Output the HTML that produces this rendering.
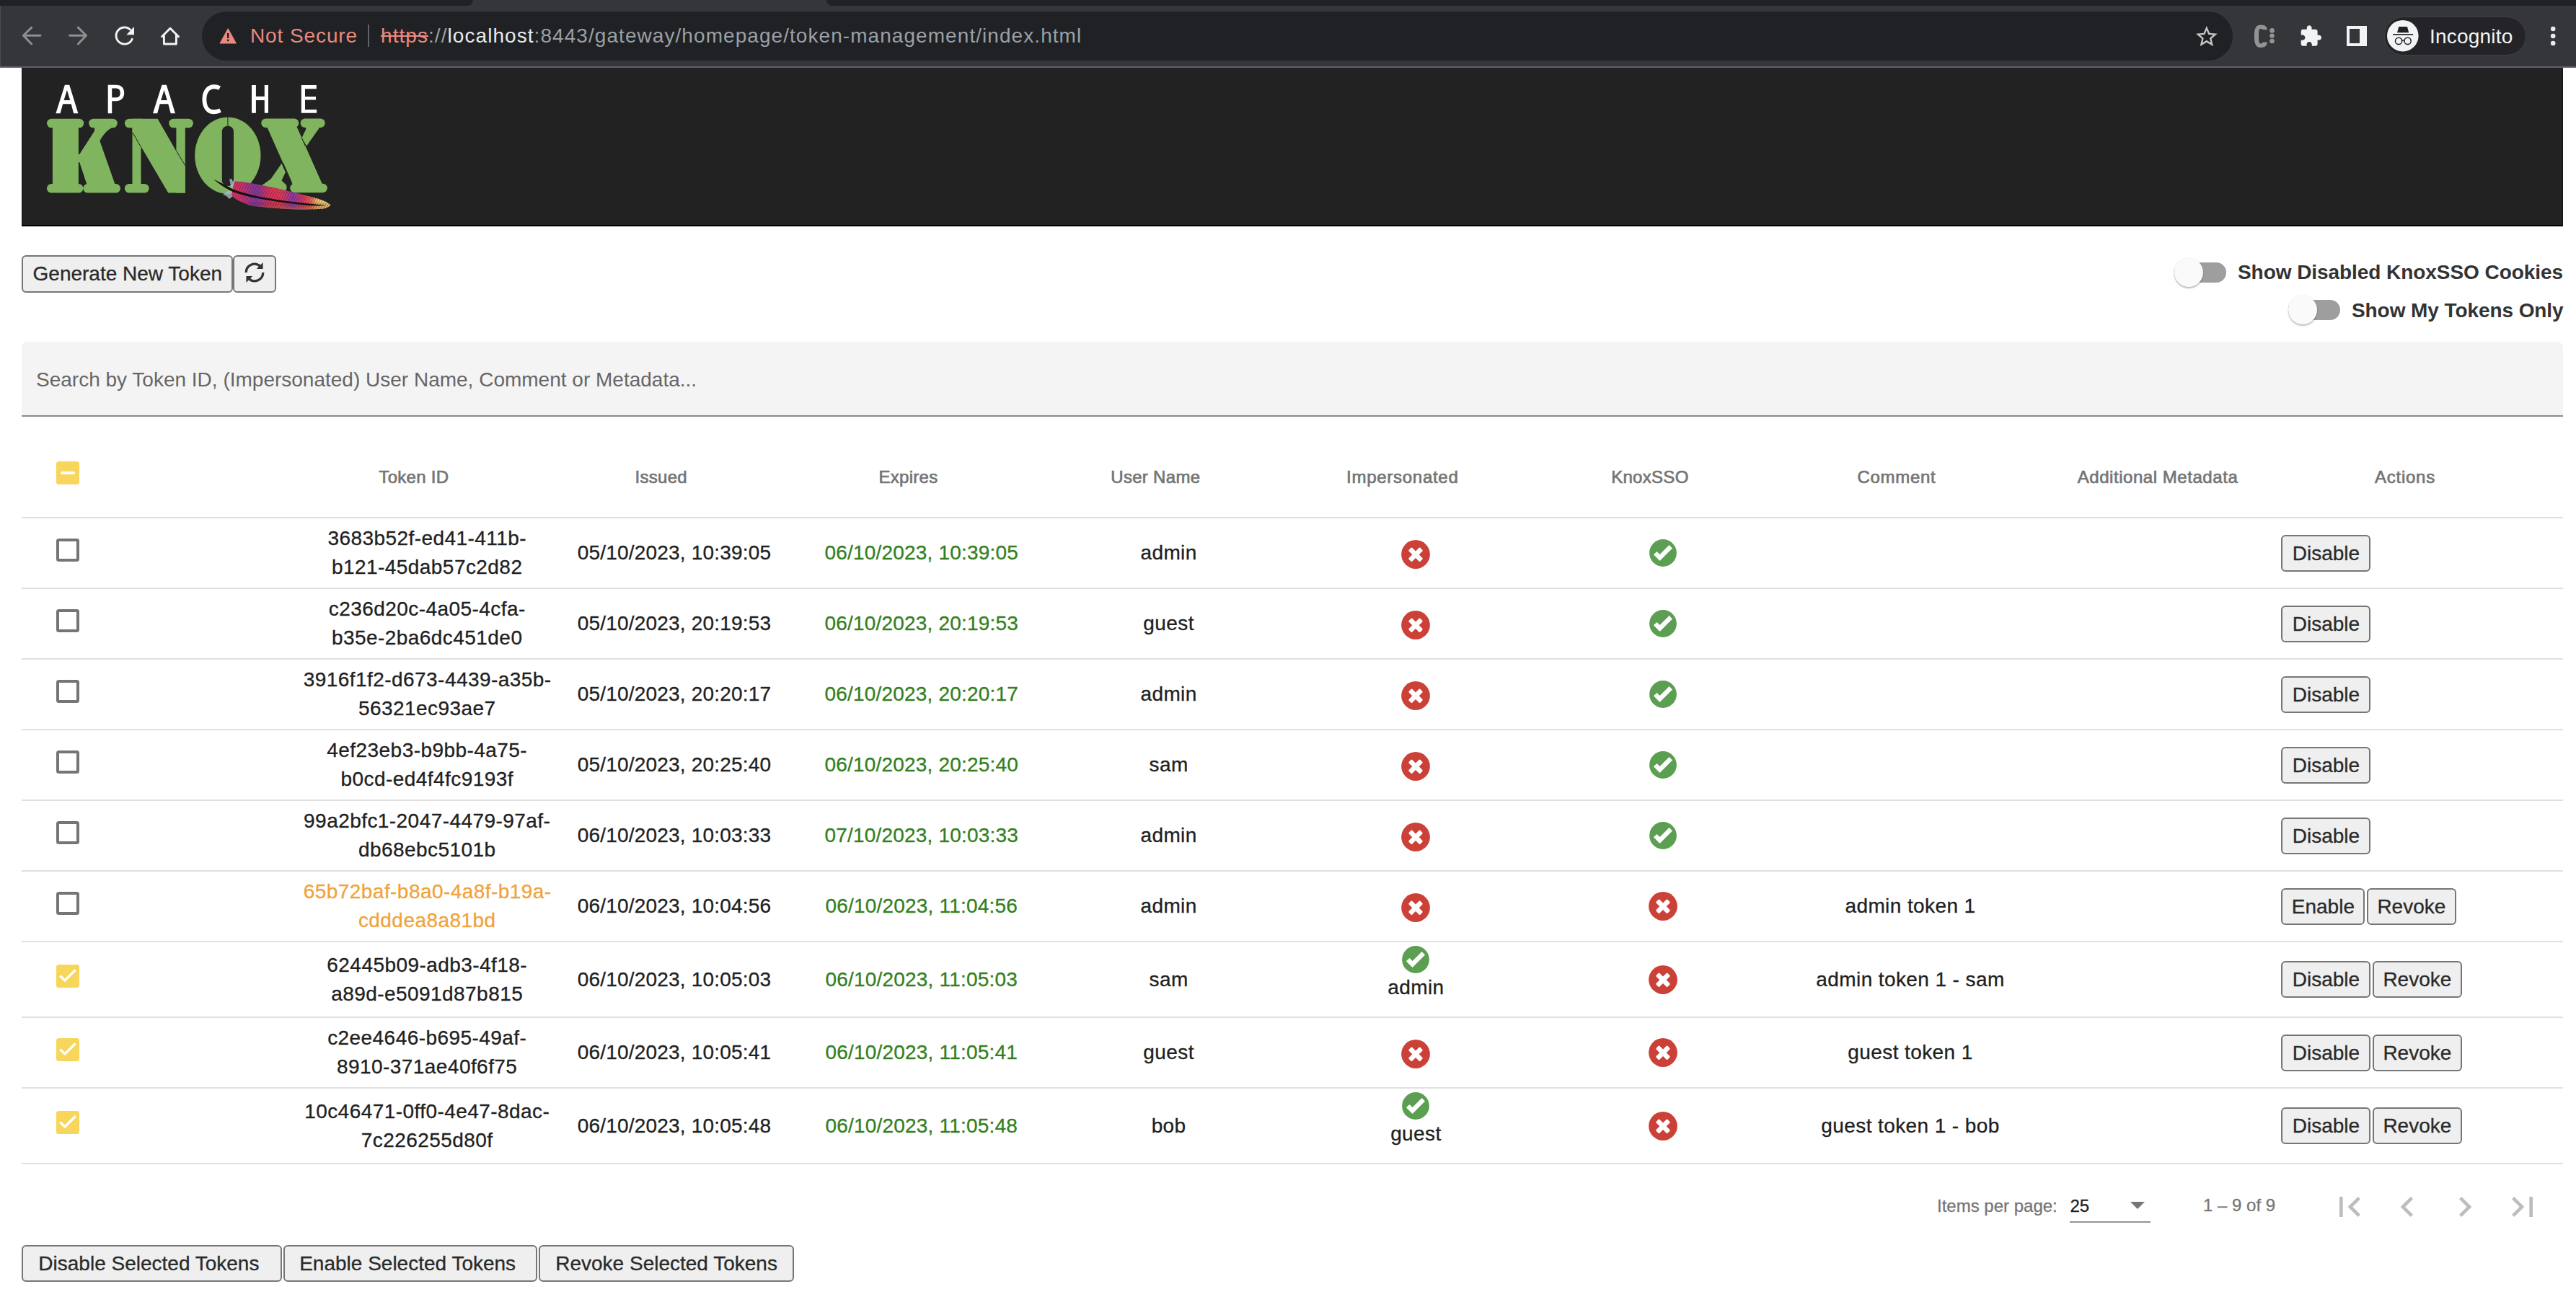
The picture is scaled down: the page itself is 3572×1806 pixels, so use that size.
<!DOCTYPE html>
<html><head><meta charset="utf-8">
<style>
*{box-sizing:border-box;margin:0;padding:0}
html,body{width:3572px;height:1806px;overflow:hidden;background:#fff}
body{position:relative;font-family:"Liberation Sans",sans-serif;color:#212121}
.a{position:absolute}
/* chrome */
#tabs{left:0;top:0;width:3572px;height:8px;background:#202124}
#tab{left:640px;top:0;width:522px;height:8px;background:#35363a}
#tabl{left:620px;top:0;width:36px;height:8px;background:#202124;border-bottom-right-radius:12px}
#tabr{left:1146px;top:0;width:36px;height:8px;background:#202124;border-bottom-left-radius:12px}
#toolbar{left:0;top:8px;width:3572px;height:84px;background:#35363a}
#tbline{left:0;top:92px;width:3572px;height:2px;background:#5f6166}
#pill{left:280px;top:16px;width:2816px;height:68px;border-radius:34px;background:#202124}
.ct{font-size:28px;line-height:28px;white-space:nowrap}
#notsec{left:347px;top:36.4px;color:#e98a80;letter-spacing:0.9px}
#sep{left:510px;top:34px;width:2px;height:31px;background:#5f6368}
#url{left:528px;top:36.4px;color:#9aa0a6;letter-spacing:1.06px}
#url .w{color:#e8eaed}
#url .s{color:#e98a80;text-decoration:line-through}
#incog{left:3305.5px;top:22.5px;width:197px;height:54px;border-radius:27px;background:#242428;border:1.5px solid #3f4044}
#incogc{left:3310px;top:28px;width:44px;height:44px;border-radius:22px;background:#f1f3f4}
#incogt{left:3369px;top:37.4px;color:#f1f3f4;letter-spacing:0.2px}
/* header */
#hdr{left:30px;top:94px;width:3524px;height:220px;background:#222;border-bottom:2px solid #000;border-left:1px solid #151515;border-right:1px solid #151515}
/* buttons */
.btn{position:absolute;height:51px;background:#efefef;border:2px solid #767676;border-radius:6px;font-size:28px;line-height:47px;text-align:center;color:#2a2a2a;white-space:nowrap;-webkit-text-stroke:0.3px #2a2a2a}
/* toggles */
.track{position:absolute;width:72px;height:28px;border-radius:14px;background:#9e9e9e}
.thumb{position:absolute;width:40px;height:40px;border-radius:20px;background:#fafafa;box-shadow:0 2px 2px rgba(0,0,0,.24),0 0 2px rgba(0,0,0,.12)}
.tlab{position:absolute;font-size:28px;line-height:28px;font-weight:bold;color:#333;white-space:nowrap}
/* search */
#search{left:30px;top:474px;width:3524px;height:104px;background:#f4f4f4;border-radius:8px 8px 0 0;border-bottom:2px solid #8a8a8a}
#ph{left:50px;top:513.4px;font-size:28px;line-height:28px;color:#666;white-space:nowrap}
/* table */
.hline{position:absolute;left:30px;width:3524px;height:2px;background:#e0e0e0}
.th{position:absolute;top:649.7px;font-size:24px;line-height:24px;color:#757575;white-space:nowrap;text-align:center;width:400px;-webkit-text-stroke:0.7px #757575;letter-spacing:0.3px}
.cb{position:absolute;left:78px;width:32px;height:32px;border-radius:3.5px}
.cbu{border:4px solid #757575}
.cby{background:#f8d65c}
.row{position:absolute;left:78px;width:3428px;display:flex;align-items:center}
.cell{position:absolute;width:342.8px;text-align:center;font-size:28px;line-height:40px;white-space:nowrap;color:#212121;letter-spacing:0.4px;-webkit-text-stroke:0.3px currentColor}
.tok{letter-spacing:0.44px}
.dt{letter-spacing:0.2px}
.ic{position:absolute}
.exp{color:#338020}
.org{color:#f0a33a}
.ic{display:inline-block;vertical-align:middle}
/* paginator */
.pg{position:absolute;font-size:24px;line-height:24px;color:#757575;white-space:nowrap;-webkit-text-stroke:0.3px currentColor}
</style></head><body>
<!-- browser chrome -->
<div id="tabs" class="a"></div>
<div id="tab" class="a"></div>
<div id="tabl" class="a"></div>
<div id="tabr" class="a"></div>
<div id="toolbar" class="a"></div>
<div id="tbline" class="a"></div>
<div class="a" style="left:0;top:8px;width:1px;height:84px;background:#4a4b4f"></div>
<div id="pill" class="a"></div>
<div id="notsec" class="a ct">Not Secure</div>
<div id="sep" class="a"></div>
<div id="url" class="a ct"><span class="s">https</span>://<span class="w">localhost</span>:8443/gateway/homepage/token-management/index.html</div>
<div id="incog" class="a"></div>
<div id="incogt" class="a ct">Incognito</div>
<svg class="a" style="left:0;top:0" width="300" height="92" viewBox="0 0 300 92">
<g fill="none" stroke="#8e8f91" stroke-width="2.9" stroke-linecap="round" stroke-linejoin="round">
<path d="M43.8 38.1L32.4 49.3L43.8 60.9M32.4 49.3H56"/>
<path d="M108.3 38.1L119.5 49.3L108.3 60.9M119.5 49.3H96.6"/>
</g>
<g fill="none" stroke="#f1f3f4" stroke-width="2.9" stroke-linecap="round">
<path d="M183.2 54.3A11.6 11.6 0 1 1 180.5 41"/>
</g>
<path d="M186 37.1V48.3H175.3Z" fill="#f1f3f4"/>
<path d="M224.5 50.7L236 39.2L247.5 50.7M227.4 49V61H244.4V49" fill="none" stroke="#f1f3f4" stroke-width="2.9" stroke-linecap="round" stroke-linejoin="round"/>
</svg>
<svg class="a" style="left:290px;top:0" width="50" height="92" viewBox="290 0 50 92">
<path d="M305.2 60L316.2 40L327.2 60Z" fill="#e98a80" stroke="#e98a80" stroke-width="1.2" stroke-linejoin="round"/>
<rect x="315" y="46" width="2.4" height="7" fill="#202124"/>
<rect x="315" y="54.6" width="2.4" height="2.6" fill="#202124"/>
</svg>
<svg class="a" style="left:3042.2px;top:32.5px" width="35.64" height="35.64" viewBox="0 0 24 24"><path fill="#c4c7c5" d="M22 9.24l-7.19-.62L12 2 9.19 8.63 2 9.24l5.46 4.73L5.82 21 12 17.27 18.18 21l-1.63-7.03L22 9.24zM12 15.4l-3.76 2.27 1-4.28-3.32-2.88 4.38-.38L12 6.1l1.71 4.04 4.38.38-3.32 2.88 1 4.28L12 15.4z"/></svg>
<svg class="a" style="left:3120px;top:30px" width="40" height="40" viewBox="3120 30 40 40">
<path d="M3143.7 41.2C3143.7 37.2 3141.5 34.4 3134.8 34.4C3128.2 34.4 3125.9 39 3125.9 50.2C3125.9 61.3 3128.2 65.9 3134.8 65.9C3141.5 65.9 3143.7 63 3143.7 58.6H3137.6C3137.6 59.8 3136.8 60.4 3134.8 60.4C3132.6 60.4 3132 58.6 3132 50.2C3132 41.7 3132.6 39.9 3134.8 39.9C3136.8 39.9 3137.6 40.4 3137.6 41.2Z" fill="#939393"/>
<circle cx="3150.5" cy="42.4" r="3.3" fill="#939393"/><circle cx="3150.5" cy="49.7" r="3.3" fill="#939393"/><circle cx="3150.5" cy="57" r="3.3" fill="#939393"/>
</svg>
<svg class="a" style="left:3187.7px;top:33.65px" width="32.35" height="32.35" viewBox="0 0 24 24"><path fill="#f1f3f4" d="M20.5 11H19V7c0-1.1-.9-2-2-2h-4V3.5C13 2.12 11.88 1 10.5 1S8 2.120 8 3.5V5H4c-1.1 0-1.99.9-1.99 2v3.8H3.5c1.49 0 2.7 1.21 2.7 2.7s-1.21 2.7-2.7 2.7H2V20c0 1.1.9 2 2 2h3.8v-1.5c0-1.49 1.21-2.7 2.7-2.7 1.490 0 2.7 1.21 2.7 2.7V22H17c1.1 0 2-.9 2-2v-4h1.5c1.38 0 2.5-1.12 2.5-2.5S21.88 11 20.5 11z"/></svg>
<div class="a" style="left:3253.8px;top:35.5px;width:28.3px;height:28.5px;background:#f1f3f4"></div>
<div class="a" style="left:3258px;top:39.9px;width:14.1px;height:19.9px;background:#35363a"></div>
<svg class="a" style="left:3305px;top:22px" width="60" height="56" viewBox="3305 22 60 56">
<circle cx="3331.8" cy="49.7" r="21.8" fill="#f1f3f4"/>
<path d="M3326.3 37H3338L3340.2 45.2H3324Z" fill="#202124"/>
<rect x="3318.1" y="47" width="28" height="1.6" fill="#202124"/>
<circle cx="3326.1" cy="56.9" r="4.6" fill="none" stroke="#202124" stroke-width="1.5"/>
<circle cx="3338.6" cy="56.9" r="4.6" fill="none" stroke="#202124" stroke-width="1.5"/>
<path d="M3330.7 56.3Q3332.3 55 3334 56.3" fill="none" stroke="#202124" stroke-width="1.5"/>
</svg>
<svg class="a" style="left:3530px;top:30px" width="20" height="40" viewBox="3530 30 20 40"><g fill="#e8eaed"><circle cx="3540.2" cy="40" r="3.3"/><circle cx="3540.2" cy="50" r="3.3"/><circle cx="3540.2" cy="60" r="3.3"/></g></svg>


<!-- header -->
<div id="hdr" class="a"></div>
<svg class="a" style="left:0;top:0" width="500" height="320" viewBox="0 0 500 320">
<defs>
<linearGradient id="fg" x1="320" y1="0" x2="460" y2="0" gradientUnits="userSpaceOnUse">
<stop offset="0" stop-color="#e03458"/><stop offset="0.12" stop-color="#c43570"/><stop offset="0.25" stop-color="#7f3aa0"/><stop offset="0.38" stop-color="#d8355a"/><stop offset="0.5" stop-color="#e23a55"/><stop offset="0.62" stop-color="#8c3aa6"/><stop offset="0.72" stop-color="#d83a5c"/><stop offset="0.8" stop-color="#ec6a52"/><stop offset="0.86" stop-color="#f2c470"/><stop offset="1" stop-color="#f6e08a"/>
</linearGradient>
<linearGradient id="fg2" x1="0" y1="262" x2="0" y2="292" gradientUnits="userSpaceOnUse">
<stop offset="0" stop-color="#000" stop-opacity="0"/><stop offset="0.6" stop-color="#000" stop-opacity="0"/><stop offset="1" stop-color="#f5b060" stop-opacity="0.55"/>
</linearGradient>
<pattern id="st" width="3.2" height="40" patternUnits="userSpaceOnUse" patternTransform="rotate(28)"><rect x="0" y="0" width="0.9" height="40" fill="#3a1030" opacity="0.45"/></pattern>
</defs>
<g fill="#fff">
<path d="M89.9 117.7H96.2L108.4 157.2H102.1L98.7 144.3H87.1L83.6 157.2H77.4ZM92.9 125L88.6 139.1H97.2Z" fill-rule="evenodd"/>
<path d="M89.9 117.7H96.2L108.4 157.2H102.1L98.7 144.3H87.1L83.6 157.2H77.4ZM92.9 125L88.6 139.1H97.2Z" fill-rule="evenodd" transform="translate(134.6 0)"/>
<path d="M149.7 117.7H161C168.2 117.7 172.2 121.8 172.2 128.9C172.2 136.1 167.6 140.2 160.6 140.2H155.2V157.2H149.7ZM155.2 122.6V135.3H160.2C164.6 135.3 166.7 133.3 166.7 128.9C166.7 124.6 164.6 122.6 160.2 122.6Z" fill-rule="evenodd"/>
<path d="M304.6 122.3C302.2 120.9 299.8 120.3 297.2 120.3C288.6 120.3 283.4 127.2 283.4 137.8C283.4 148.6 288.4 155.3 297 155.3C300.2 155.3 302.8 154.6 305.6 153.2" fill="none" stroke="#fff" stroke-width="5.9"/>
<path d="M349 118H354.9V133.8H366.8V118H372V156.8H366.8V139H354.9V156.8H349Z"/>
<path d="M417.8 118H438.8V123.3H423V134.1H438V138.6H423V151.9H439.1V156.8H417.8Z"/>
</g>
<g fill="#80b45f">
<!-- K -->
<rect x="72.9" y="170" width="36" height="92"/>
<rect x="65" y="164.7" width="51.2" height="12.6" rx="6.3"/>
<rect x="65" y="255" width="50.3" height="12.6" rx="6.3"/>
<rect x="123.1" y="164.7" width="39.7" height="12.6" rx="6.3"/>
<rect x="115.3" y="255" width="51.6" height="12.6" rx="6.3"/>
<path d="M131 176H156.8C152 179 149.5 180.5 146.7 183.6C143.5 187 140.5 191.5 138.4 195.6L160 257H120.8L110.2 225H106V214H110.2L131 181.7Z"/>
<!-- N -->
<rect x="172.9" y="164.7" width="30" height="12.6" rx="6.3"/>
<rect x="183.5" y="170" width="12" height="92"/>
<rect x="172.9" y="255" width="33.7" height="12.6" rx="6.3"/>
<path d="M183.5 164.7H218.6L256.8 231.5V267.6H233.3L183.5 182.7Z"/>
<rect x="244.4" y="170" width="12.4" height="97.6"/>
<rect x="234.2" y="164.7" width="33.7" height="12.6" rx="6.3"/>
<!-- O -->
<path d="M315.9 162.4A45.7 53.3 0 1 1 315.8 162.4ZM316 174.4C311.5 174.4 307.8 178 307.8 182.5V250C307.8 254.5 311.5 258 316 258C320.5 258 324 254.5 324 250V182.5C324 178 320.5 174.4 316 174.4Z" fill-rule="evenodd"/>
<!-- X -->
<rect x="362.2" y="164.5" width="52.1" height="12.5" rx="6.3"/>
<rect x="416.6" y="164.5" width="34.1" height="12.5" rx="6.3"/>
<path d="M369.8 175H411.2L447.6 257H406.2Z"/>
<path d="M424.2 175H443.5L441.7 179.1L425.1 202.5L418.4 191.3L424.2 179.6Z"/>
<path d="M390.5 226.8L395.9 238.9L390.5 250.6L397.3 256.9V262H364L364.9 256L375.7 247.9Z"/>
<rect x="402.2" y="254.7" width="51.7" height="12.5" rx="6.3"/>
<rect x="362" y="254.7" width="35.3" height="12.5" rx="6.3"/>
</g>
<g stroke="#222" stroke-width="1" fill="none">
<path d="M315.9 161V174.5"/>
<path d="M184 184L195.5 204"/>
<path d="M244.6 209.4L256.8 229.7"/>
<path d="M392.6 226.3L404.4 253"/>
<path d="M418.4 191.3L423.2 202"/>
</g>
<!-- feather -->
<g>
<path d="M318 249L321 247.5L323 252L326 248L325 256L321 262Z" fill="#a9bccb" opacity="0.8"/>
<path d="M309 270L316 265L322 263L323 272L318 276L314 272Z" fill="#a9bccb" opacity="0.8"/>
<path d="M325.3 251.5C345 252.5 370 258 391.9 263.1C410 267.5 432 273 446.2 277.4C452 279.5 457 282 458.5 284.8C455 288 450 289.6 446.2 289.8C430 291 405 290.5 385.1 288.9C365 287.5 350 286 344.3 284.2C332 280 324 275 321.2 270.6C322 264 323.5 257 325.3 251.5Z" fill="url(#fg)"/>
<path d="M325.3 251.5C345 252.5 370 258 391.9 263.1C410 267.5 432 273 446.2 277.4C452 279.5 457 282 458.5 284.8C455 288 450 289.6 446.2 289.8C430 291 405 290.5 385.1 288.9C365 287.5 350 286 344.3 284.2C332 280 324 275 321.2 270.6C322 264 323.5 257 325.3 251.5Z" fill="url(#fg2)"/>
<path d="M325.3 251.5C345 252.5 370 258 391.9 263.1C410 267.5 432 273 446.2 277.4C452 279.5 457 282 458.5 284.8C455 288 450 289.6 446.2 289.8C430 291 405 290.5 385.1 288.9C365 287.5 350 286 344.3 284.2C332 280 324 275 321.2 270.6C322 264 323.5 257 325.3 251.5Z" fill="url(#st)"/>
<path d="M296.1 248.8C310 255 316 259 322 262C345 271 372 275.8 412.3 280.8C430 283 445 284 453 284.6C445 286 430 285.5 412.3 283.2C372 278.2 345 274.5 321 265.2C314 262 305 256 296.1 248.8Z" fill="#1a0f14"/>
</g>
</svg>


<!-- controls -->
<div class="btn" style="left:30.3px;top:354px;width:293px;height:51.5px;line-height:47.5px">Generate New Token</div>
<div class="btn" style="left:323.3px;top:354px;width:59.3px;height:51.5px"></div>
<svg class="a" style="left:323.3px;top:352.9px" width="60" height="50" viewBox="-30 -25 60 50"><g><path d="M-11.75 0A11.75 11.75 0 0 1 7.8 -8.8" fill="none" stroke="#333" stroke-width="3.3"/><path d="M11.56 -14.1V-5.1H2.8Z" fill="#333"/></g><g transform="rotate(180)"><path d="M-11.75 0A11.75 11.75 0 0 1 7.8 -8.8" fill="none" stroke="#333" stroke-width="3.3"/><path d="M11.56 -14.1V-5.1H2.8Z" fill="#333"/></g></svg>

<div class="track" style="left:3015px;top:364px"></div>
<div class="thumb" style="left:3015px;top:358px"></div>
<div class="tlab" style="left:3103px;top:364px;letter-spacing:-0.06px">Show Disabled KnoxSSO Cookies</div>
<div class="track" style="left:3173px;top:416px"></div>
<div class="thumb" style="left:3173px;top:410px"></div>
<div class="tlab" style="left:3261px;top:416.5px;letter-spacing:-0.08px">Show My Tokens Only</div>

<div id="search" class="a"></div>
<div id="ph" class="a">Search by Token ID, (Impersonated) User Name, Comment or Metadata...</div>

<div class="th" style="left:373.9px;letter-spacing:0.30px">Token ID</div>
<div class="th" style="left:716.7px;letter-spacing:0.30px">Issued</div>
<div class="th" style="left:1059.5px;letter-spacing:0.30px">Expires</div>
<div class="th" style="left:1402.3px;letter-spacing:0.30px">User Name</div>
<div class="th" style="left:1744.8px;letter-spacing:0.72px">Impersonated</div>
<div class="th" style="left:2087.9px;letter-spacing:0.30px">KnoxSSO</div>
<div class="th" style="left:2429.9px;letter-spacing:0.70px">Comment</div>
<div class="th" style="left:2792.0px;letter-spacing:0.55px">Additional Metadata</div>
<div class="th" style="left:3135.0px;letter-spacing:0.75px">Actions</div>
<div class="cb cby" style="top:640px"><div style="position:absolute;left:6px;top:14px;width:20px;height:4px;border-radius:2px;background:#fff"></div></div>
<div class="hline" style="top:717px"></div>
<div class="hline" style="top:815px"></div>
<div class="hline" style="top:913px"></div>
<div class="hline" style="top:1011px"></div>
<div class="hline" style="top:1109px"></div>
<div class="hline" style="top:1207px"></div>
<div class="hline" style="top:1305px"></div>
<div class="hline" style="top:1410px"></div>
<div class="hline" style="top:1508px"></div>
<div class="hline" style="top:1613px"></div>
<div class="cb cbu" style="top:747.0px"></div>
<div class="cell tok" style="left:420.8px;top:727.0px">3683b52f-ed41-411b-<br>b121-45dab57c2d82</div>
<div class="cell dt" style="left:763.6px;top:747.0px">05/10/2023, 10:39:05</div>
<div class="cell dt exp" style="left:1106.4px;top:747.0px">06/10/2023, 10:39:05</div>
<div class="cell" style="left:1449.2px;top:747.0px">admin</div>
<svg class="ic" style="left:1943.4px;top:749.0px" width="40" height="40" viewBox="-20 -20 40 40"><circle r="19.9" fill="#cb4138"/><g fill="#fff" transform="translate(0 0.3) rotate(45)"><rect x="-11.2" y="-3.3" width="22.4" height="6.6" rx="1.5"/><rect x="-3.3" y="-11.2" width="6.6" height="22.4" rx="1.5"/></g></svg>
<svg class="ic" style="left:2287.2px;top:748.0px" width="38" height="38" viewBox="-19 -19 38 38"><circle r="18.9" fill="#5c9e52"/><path d="M-13.1 2.3 L-8.5 -2.0 L-4.45 1.9 L8.6 -11.0 L13.0 -6.6 L-4.45 11.1Z" fill="#fff"/></svg>
<div class="btn" style="left:3163.4px;top:741.5px;width:124.0px">Disable</div>
<div class="cb cbu" style="top:845.0px"></div>
<div class="cell tok" style="left:420.8px;top:825.0px">c236d20c-4a05-4cfa-<br>b35e-2ba6dc451de0</div>
<div class="cell dt" style="left:763.6px;top:845.0px">05/10/2023, 20:19:53</div>
<div class="cell dt exp" style="left:1106.4px;top:845.0px">06/10/2023, 20:19:53</div>
<div class="cell" style="left:1449.2px;top:845.0px">guest</div>
<svg class="ic" style="left:1943.4px;top:847.0px" width="40" height="40" viewBox="-20 -20 40 40"><circle r="19.9" fill="#cb4138"/><g fill="#fff" transform="translate(0 0.3) rotate(45)"><rect x="-11.2" y="-3.3" width="22.4" height="6.6" rx="1.5"/><rect x="-3.3" y="-11.2" width="6.6" height="22.4" rx="1.5"/></g></svg>
<svg class="ic" style="left:2287.2px;top:846.0px" width="38" height="38" viewBox="-19 -19 38 38"><circle r="18.9" fill="#5c9e52"/><path d="M-13.1 2.3 L-8.5 -2.0 L-4.45 1.9 L8.6 -11.0 L13.0 -6.6 L-4.45 11.1Z" fill="#fff"/></svg>
<div class="btn" style="left:3163.4px;top:839.5px;width:124.0px">Disable</div>
<div class="cb cbu" style="top:943.0px"></div>
<div class="cell tok" style="left:420.8px;top:923.0px">3916f1f2-d673-4439-a35b-<br>56321ec93ae7</div>
<div class="cell dt" style="left:763.6px;top:943.0px">05/10/2023, 20:20:17</div>
<div class="cell dt exp" style="left:1106.4px;top:943.0px">06/10/2023, 20:20:17</div>
<div class="cell" style="left:1449.2px;top:943.0px">admin</div>
<svg class="ic" style="left:1943.4px;top:945.0px" width="40" height="40" viewBox="-20 -20 40 40"><circle r="19.9" fill="#cb4138"/><g fill="#fff" transform="translate(0 0.3) rotate(45)"><rect x="-11.2" y="-3.3" width="22.4" height="6.6" rx="1.5"/><rect x="-3.3" y="-11.2" width="6.6" height="22.4" rx="1.5"/></g></svg>
<svg class="ic" style="left:2287.2px;top:944.0px" width="38" height="38" viewBox="-19 -19 38 38"><circle r="18.9" fill="#5c9e52"/><path d="M-13.1 2.3 L-8.5 -2.0 L-4.45 1.9 L8.6 -11.0 L13.0 -6.6 L-4.45 11.1Z" fill="#fff"/></svg>
<div class="btn" style="left:3163.4px;top:937.5px;width:124.0px">Disable</div>
<div class="cb cbu" style="top:1041.0px"></div>
<div class="cell tok" style="left:420.8px;top:1021.0px">4ef23eb3-b9bb-4a75-<br>b0cd-ed4f4fc9193f</div>
<div class="cell dt" style="left:763.6px;top:1041.0px">05/10/2023, 20:25:40</div>
<div class="cell dt exp" style="left:1106.4px;top:1041.0px">06/10/2023, 20:25:40</div>
<div class="cell" style="left:1449.2px;top:1041.0px">sam</div>
<svg class="ic" style="left:1943.4px;top:1043.0px" width="40" height="40" viewBox="-20 -20 40 40"><circle r="19.9" fill="#cb4138"/><g fill="#fff" transform="translate(0 0.3) rotate(45)"><rect x="-11.2" y="-3.3" width="22.4" height="6.6" rx="1.5"/><rect x="-3.3" y="-11.2" width="6.6" height="22.4" rx="1.5"/></g></svg>
<svg class="ic" style="left:2287.2px;top:1042.0px" width="38" height="38" viewBox="-19 -19 38 38"><circle r="18.9" fill="#5c9e52"/><path d="M-13.1 2.3 L-8.5 -2.0 L-4.45 1.9 L8.6 -11.0 L13.0 -6.6 L-4.45 11.1Z" fill="#fff"/></svg>
<div class="btn" style="left:3163.4px;top:1035.5px;width:124.0px">Disable</div>
<div class="cb cbu" style="top:1139.0px"></div>
<div class="cell tok" style="left:420.8px;top:1119.0px">99a2bfc1-2047-4479-97af-<br>db68ebc5101b</div>
<div class="cell dt" style="left:763.6px;top:1139.0px">06/10/2023, 10:03:33</div>
<div class="cell dt exp" style="left:1106.4px;top:1139.0px">07/10/2023, 10:03:33</div>
<div class="cell" style="left:1449.2px;top:1139.0px">admin</div>
<svg class="ic" style="left:1943.4px;top:1141.0px" width="40" height="40" viewBox="-20 -20 40 40"><circle r="19.9" fill="#cb4138"/><g fill="#fff" transform="translate(0 0.3) rotate(45)"><rect x="-11.2" y="-3.3" width="22.4" height="6.6" rx="1.5"/><rect x="-3.3" y="-11.2" width="6.6" height="22.4" rx="1.5"/></g></svg>
<svg class="ic" style="left:2287.2px;top:1140.0px" width="38" height="38" viewBox="-19 -19 38 38"><circle r="18.9" fill="#5c9e52"/><path d="M-13.1 2.3 L-8.5 -2.0 L-4.45 1.9 L8.6 -11.0 L13.0 -6.6 L-4.45 11.1Z" fill="#fff"/></svg>
<div class="btn" style="left:3163.4px;top:1133.5px;width:124.0px">Disable</div>
<div class="cb cbu" style="top:1237.0px"></div>
<div class="cell tok org" style="left:420.8px;top:1217.0px">65b72baf-b8a0-4a8f-b19a-<br>cdddea8a81bd</div>
<div class="cell dt" style="left:763.6px;top:1237.0px">06/10/2023, 10:04:56</div>
<div class="cell dt exp" style="left:1106.4px;top:1237.0px">06/10/2023, 11:04:56</div>
<div class="cell" style="left:1449.2px;top:1237.0px">admin</div>
<svg class="ic" style="left:1943.4px;top:1239.0px" width="40" height="40" viewBox="-20 -20 40 40"><circle r="19.9" fill="#cb4138"/><g fill="#fff" transform="translate(0 0.3) rotate(45)"><rect x="-11.2" y="-3.3" width="22.4" height="6.6" rx="1.5"/><rect x="-3.3" y="-11.2" width="6.6" height="22.4" rx="1.5"/></g></svg>
<svg class="ic" style="left:2286.2px;top:1237.0px" width="40" height="40" viewBox="-20 -20 40 40"><circle r="19.9" fill="#cb4138"/><g fill="#fff" transform="translate(0 0.3) rotate(45)"><rect x="-11.2" y="-3.3" width="22.4" height="6.6" rx="1.5"/><rect x="-3.3" y="-11.2" width="6.6" height="22.4" rx="1.5"/></g></svg>
<div class="cell" style="left:2477.6px;top:1237.0px">admin token 1</div>
<div class="btn" style="left:3163.4px;top:1231.5px;width:116.0px">Enable</div>
<div class="btn" style="left:3281.6px;top:1231.5px;width:124.5px">Revoke</div>
<div class="cb cby" style="top:1338.0px"><svg width="32" height="32" style="position:absolute;left:0;top:0"><path d="M5.3 15.6 L12 21.9 L26.8 7.2" fill="none" stroke="#fff" stroke-width="3.4"/></svg></div>
<div class="cell tok" style="left:420.8px;top:1318.5px">62445b09-adb3-4f18-<br>a89d-e5091d87b815</div>
<div class="cell dt" style="left:763.6px;top:1338.5px">06/10/2023, 10:05:03</div>
<div class="cell dt exp" style="left:1106.4px;top:1338.5px">06/10/2023, 11:05:03</div>
<div class="cell" style="left:1449.2px;top:1338.5px">sam</div>
<svg class="ic" style="left:1944.4px;top:1311.5px" width="38" height="38" viewBox="-19 -19 38 38"><circle r="18.9" fill="#5c9e52"/><path d="M-13.1 2.3 L-8.5 -2.0 L-4.45 1.9 L8.6 -11.0 L13.0 -6.6 L-4.45 11.1Z" fill="#fff"/></svg>
<div class="cell" style="left:1792.0px;top:1349.8px">admin</div>
<svg class="ic" style="left:2286.2px;top:1338.5px" width="40" height="40" viewBox="-20 -20 40 40"><circle r="19.9" fill="#cb4138"/><g fill="#fff" transform="translate(0 0.3) rotate(45)"><rect x="-11.2" y="-3.3" width="22.4" height="6.6" rx="1.5"/><rect x="-3.3" y="-11.2" width="6.6" height="22.4" rx="1.5"/></g></svg>
<div class="cell" style="left:2477.6px;top:1338.5px">admin token 1 - sam</div>
<div class="btn" style="left:3163.4px;top:1333.0px;width:124.0px">Disable</div>
<div class="btn" style="left:3289.6px;top:1333.0px;width:124.5px">Revoke</div>
<div class="cb cby" style="top:1439.5px"><svg width="32" height="32" style="position:absolute;left:0;top:0"><path d="M5.3 15.6 L12 21.9 L26.8 7.2" fill="none" stroke="#fff" stroke-width="3.4"/></svg></div>
<div class="cell tok" style="left:420.8px;top:1420.0px">c2ee4646-b695-49af-<br>8910-371ae40f6f75</div>
<div class="cell dt" style="left:763.6px;top:1440.0px">06/10/2023, 10:05:41</div>
<div class="cell dt exp" style="left:1106.4px;top:1440.0px">06/10/2023, 11:05:41</div>
<div class="cell" style="left:1449.2px;top:1440.0px">guest</div>
<svg class="ic" style="left:1943.4px;top:1442.0px" width="40" height="40" viewBox="-20 -20 40 40"><circle r="19.9" fill="#cb4138"/><g fill="#fff" transform="translate(0 0.3) rotate(45)"><rect x="-11.2" y="-3.3" width="22.4" height="6.6" rx="1.5"/><rect x="-3.3" y="-11.2" width="6.6" height="22.4" rx="1.5"/></g></svg>
<svg class="ic" style="left:2286.2px;top:1440.0px" width="40" height="40" viewBox="-20 -20 40 40"><circle r="19.9" fill="#cb4138"/><g fill="#fff" transform="translate(0 0.3) rotate(45)"><rect x="-11.2" y="-3.3" width="22.4" height="6.6" rx="1.5"/><rect x="-3.3" y="-11.2" width="6.6" height="22.4" rx="1.5"/></g></svg>
<div class="cell" style="left:2477.6px;top:1440.0px">guest token 1</div>
<div class="btn" style="left:3163.4px;top:1434.5px;width:124.0px">Disable</div>
<div class="btn" style="left:3289.6px;top:1434.5px;width:124.5px">Revoke</div>
<div class="cb cby" style="top:1541.0px"><svg width="32" height="32" style="position:absolute;left:0;top:0"><path d="M5.3 15.6 L12 21.9 L26.8 7.2" fill="none" stroke="#fff" stroke-width="3.4"/></svg></div>
<div class="cell tok" style="left:420.8px;top:1521.5px">10c46471-0ff0-4e47-8dac-<br>7c226255d80f</div>
<div class="cell dt" style="left:763.6px;top:1541.5px">06/10/2023, 10:05:48</div>
<div class="cell dt exp" style="left:1106.4px;top:1541.5px">06/10/2023, 11:05:48</div>
<div class="cell" style="left:1449.2px;top:1541.5px">bob</div>
<svg class="ic" style="left:1944.4px;top:1514.5px" width="38" height="38" viewBox="-19 -19 38 38"><circle r="18.9" fill="#5c9e52"/><path d="M-13.1 2.3 L-8.5 -2.0 L-4.45 1.9 L8.6 -11.0 L13.0 -6.6 L-4.45 11.1Z" fill="#fff"/></svg>
<div class="cell" style="left:1792.0px;top:1552.8px">guest</div>
<svg class="ic" style="left:2286.2px;top:1541.5px" width="40" height="40" viewBox="-20 -20 40 40"><circle r="19.9" fill="#cb4138"/><g fill="#fff" transform="translate(0 0.3) rotate(45)"><rect x="-11.2" y="-3.3" width="22.4" height="6.6" rx="1.5"/><rect x="-3.3" y="-11.2" width="6.6" height="22.4" rx="1.5"/></g></svg>
<div class="cell" style="left:2477.6px;top:1541.5px">guest token 1 - bob</div>
<div class="btn" style="left:3163.4px;top:1536.0px;width:124.0px">Disable</div>
<div class="btn" style="left:3289.6px;top:1536.0px;width:124.5px">Revoke</div>
<div class="pg" style="left:2686px;top:1660.7px">Items per page:</div>
<div class="pg" style="left:2870.5px;top:1660.7px;color:#212121">25</div>
<svg class="a" style="left:2954px;top:1667px" width="20" height="10" viewBox="0 0 20 10"><path d="M0 0H20L10 10Z" fill="#757575"/></svg>
<div class="a" style="left:2870px;top:1694px;width:112px;height:2px;background:#949494"></div>
<div class="pg" style="left:3055px;top:1659.5px">1 &ndash; 9 of 9</div>
<svg class="a" style="left:3229.9px;top:1645.8px" width="56" height="56" viewBox="0 0 24 24"><path fill="#bdbdbd" d="M18.41 16.59L13.82 12l4.59-4.59L17 6l-6 6 6 6zM6 6h2v12H6z"/></svg>
<svg class="a" style="left:3310.1px;top:1645.8px" width="56" height="56" viewBox="0 0 24 24"><path fill="#bdbdbd" d="M15.41 7.41L14 6l-6 6 6 6 1.41-1.41L10.83 12z"/></svg>
<svg class="a" style="left:3390px;top:1645.8px" width="56" height="56" viewBox="0 0 24 24"><path fill="#bdbdbd" d="M10 6L8.59 7.41 13.17 12l-4.58 4.59L10 18l6-6z"/></svg>
<svg class="a" style="left:3470.2px;top:1645.8px" width="56" height="56" viewBox="0 0 24 24"><path fill="#bdbdbd" d="M5.59 7.41L10.18 12l-4.59 4.59L7 18l6-6-6-6zM16 6h2v12h-2z"/></svg>

<div class="btn" style="left:30.4px;top:1727.3px;width:361px;padding-right:9px">Disable Selected Tokens</div>
<div class="btn" style="left:392.8px;top:1727.3px;width:352.7px;padding-right:8px">Enable Selected Tokens</div>
<div class="btn" style="left:747px;top:1727.3px;width:354.2px">Revoke Selected Tokens</div>
</body></html>
